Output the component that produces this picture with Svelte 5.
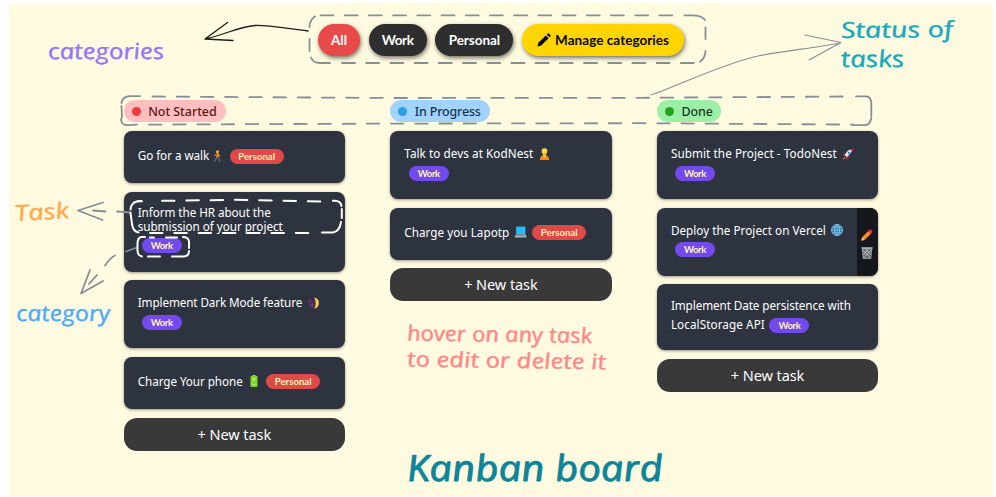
<script>
  const filters = [
    { label: 'All', kind: 'active', width: 42, text: 16 },
    { label: 'Work', kind: 'dark', width: 58, text: 32 },
    { label: 'Personal', kind: 'dark', width: 78, text: 51.5 },
    { label: 'Manage categories', kind: 'manage', width: 162, text: 114 }
  ];

  const columns = [
    {
      title: 'Not Started', tone: 'red', width: 102, text: 68.5,
      tasks: [
        { height: 51.5, pad: 15, gap: 9, lines: [{ text: 'Go for a walk', w: 71.5, icon: 'walk', iw: 8, space: 4, tag: 'Personal', tagGap: 8.5 }] },
        { height: 80, pad: 13, gap: 8, lines: [{ text: 'Inform the HR about the', w: 133, tight: true }, { text: 'submission of your project', w: 145, tight: true }, { tag: 'Work', tagGap: 4, tall: true }] },
        { height: 68, pad: 13.5, gap: 9.5, lines: [{ text: 'Implement Dark Mode feature', w: 164.5, icon: 'moon', iw: 12, space: 5 }, { tag: 'Work', tagGap: 4 }] },
        { height: 51.5, pad: 14.5, gap: 9, lines: [{ text: 'Charge Your phone', w: 105, icon: 'battery', iw: 10, space: 6, tag: 'Personal', tagGap: 7.5 }] }
      ]
    },
    {
      title: 'In Progress', tone: 'blue', width: 99.5, text: 66,
      tasks: [
        { height: 67.5, pad: 13, gap: 9, lines: [{ text: 'Talk to devs at KodNest', w: 129, icon: 'person', iw: 11, space: 5.5 }, { tag: 'Work', tagGap: 4.5 }] },
        { height: 52.5, pad: 15, gap: 8, lines: [{ text: 'Charge you Lapotp', w: 105, icon: 'laptop', iw: 13, space: 4.5, tag: 'Personal', tagGap: 5.5 }] }
      ]
    },
    {
      title: 'Done', tone: 'green', width: 64.5, text: 31.5,
      tasks: [
        { height: 67.5, pad: 13, gap: 9, lines: [{ text: 'Submit the Project - TodoNest', w: 166, icon: 'rocket', iw: 12, space: 5 }, { tag: 'Work', tagGap: 4 }] },
        { height: 68, pad: 13, gap: 8.5, tools: true, lines: [{ text: 'Deploy the Project on Vercel', w: 155, icon: 'globe', iw: 12, space: 5 }, { tag: 'Work', tagGap: 4 }] },
        { height: 66, pad: 12, gap: 9, lines: [{ text: 'Implement Date persistence with', w: 180 }, { text: 'LocalStorage API', w: 94, tag: 'Work', tagGap: 4.5 }] }
      ]
    }
  ];

  // Spread the letters so that a label fills its measure.
  function fit(node, width) {
    node.style.letterSpacing = '0px';
    const natural = node.getBoundingClientRect().width;
    node.style.letterSpacing = (width - natural) / node.textContent.length + 'px';
  }
</script>

{#snippet icon(name, w)}
  <svg class="icon" width={w} height="12" viewBox="0 0 {w} 12">
    {#if name === 'walk'}
      <circle cx="4.5" cy="1.7" r="1.5" fill="#f5b82e" />
      <path d="M3.5 3.2h2l.5 4h-3z" fill="#f58220" />
      <path d="M3.4 3.8 1.2 6M5.5 4l2 2.3" stroke="#e3a62c" stroke-width="1" fill="none" />
      <path d="M3.7 7 3 9.2 1.3 11.5M5.2 7l.8 2 .7 2.5" stroke="#65727e" stroke-width="1.2" fill="none" />
    {:else if name === 'moon'}
      <circle cx="6" cy="6" r="5.7" fill="#46304f" />
      <path d="M7.2.4A5.7 5.7 0 0 1 7.2 11.6Q10.500 6 7.2.4" fill="#ffd04a" />
      <circle cx="3" cy="4" r="1.1" fill="#6b4176" /><circle cx="5.3" cy="8" r="1.4" fill="#6b4176" /><circle cx="5.6" cy="2.5" r=".7" fill="#27192d" />
    {:else if name === 'battery'}
      <rect x="3.5" y="0" width="3" height="2" fill="#b8c4c8" />
      <rect x="1.5" y="1" width="7" height="11" rx="1" fill="#83d72b" />
      <path d="M5 3v2.4M3.8 4.2h2.4M4 9.5h2" stroke="#e3f6cf" stroke-width=".9" />
    {:else if name === 'person'}
      <path d="M.8 12q.4-5 4.700-5t4.700 5z" fill="#f58a16" />
      <path d="M4 6h3v2.500L5.500 10 4 8.500z" fill="#f7bd35" />
      <circle cx="5.5" cy="3.8" r="2.7" fill="#ffc83d" />
      <path d="M2.600 3.600Q2.500.2 5.500.2t2.900 3.400z" fill="#f6df42" />
    {:else if name === 'laptop'}
      <rect x="2" y=".5" width="9.5" height="8" rx=".6" fill="#20bdf7" stroke="#46616f" stroke-width=".5" />
      <path d="M1.800 8.500h9.800l1.200 3H.6z" fill="#b4b7bb" /><path d="M2.200 9.700h8.800" stroke="#777" stroke-width=".7" />
    {:else if name === 'rocket'}
      <path d="m2.300 5.200-2 2.700 2.600-.3 1.800 1.800-.3 2.400 2.900-2.700z" fill="#e3174b" />
      <path d="M2.800 7Q5.500 1.400 9.800 1.200q.8 3-5.200 8z" fill="#e4edf2" />
      <path d="M11.800.2 8.200 1.200 10.800 4z" fill="#e3174b" />
      <circle cx="7" cy="5" r="1.3" fill="#418ab7" /><path d="m2.800 9-2.300 2.400 2.800-1z" fill="#f8a524" />
    {:else if name === 'globe'}
      <circle cx="6" cy="6" r="5.5" fill="#2679ad" stroke="#79bce2" stroke-width=".9" />
      <ellipse cx="6" cy="6" rx="2.5" ry="5.5" fill="none" stroke="#9ad0ee" stroke-width=".8" />
      <path d="M6 .5v11M.5 6h11M1.300 3.200h9.400M1.300 8.800h9.400" fill="none" stroke="#9ad0ee" stroke-width=".7" />
    {:else if name === 'pencil'}
      <path d="m1 8.300 6.500-6.500 2.700 2.700L3.700 11z" fill="#fb8a24" /><path d="m7 2.300 1.400-1.500q.8-.8 1.700 0l1 .9q.8.8 0 1.700L9.700 5z" fill="#ee2a50" /><path d="m1 8.300-.8 3.500 3.500-.8z" fill="#f6c98c" />
    {:else if name === 'bin'}
      <path d="M1.200 1.800 2.200 11.500h7.600l1-9.700z" fill="#60666a" stroke="#b9bec1" stroke-width=".7" />
      <path d="M2 3l7.300 8M4.800 2.200l5 5.800M10 3l-7.300 8M7.200 2.200l-5 5.800" stroke="#d1d5d8" stroke-width=".8" fill="none" /><path d="M.4 1.100h11.200" stroke="#b9bec1" stroke-width="1.5" />
    {/if}
  </svg>
{/snippet}

<main>
  <div class="canvas">
    <nav>
      {#each filters as f}
        <button class={f.kind} style="width:{f.width}px">
          {#if f.kind === 'manage'}
            <svg width="14" height="14" viewBox="0 0 14 14"><path d="M.5 13.500 1.400 9.800 8.800 2.400l2.800 2.800-7.400 7.400zM9.700 1.600l.9-.9q.7-.7 1.400 0l1.300 1.300q.7.7 0 1.400l-.9.9z" /></svg>
          {/if}
          <span use:fit={f.text}>{f.label}</span>
        </button>
      {/each}
    </nav>
    <div class="board">
      {#each columns as col}
        <section>
          <h2 class={col.tone} style="width:{col.width}px"><i></i><span use:fit={col.text}>{col.title}</span></h2>
          {#each col.tasks as task}
            <article style="height:{task.height}px;padding-top:{task.pad}px;margin-bottom:{task.gap}px">
              {#each task.lines as line}
                <div class="line" class:tight={line.tight} class:tall={line.tall}>
                  {#if line.text}<span use:fit={line.w}>{line.text}</span>{/if}
                  {#if line.icon}<b class="emoji" style="margin-left:{line.space}px">{@render icon(line.icon, line.iw)}</b>{/if}
                  {#if line.tag}<em class={line.tag} style="margin-left:{line.tagGap}px"><span use:fit={line.tag === 'Work' ? 22 : 37}>{line.tag}</span></em>{/if}
                </div>
              {/each}
              {#if task.tools}
                <aside>{@render icon('pencil', 12)}{@render icon('bin', 12)}</aside>
              {/if}
            </article>
          {/each}
          <button class="new"><span use:fit={73.5}>+ New task</span></button>
        </section>
      {/each}
    </div>
  </div>

  <svg class="notes" width="996" height="497" viewBox="0 0 996 497">
    <g class="stroke">
      <path stroke-dasharray="13 11.2" d="M320.500 15.300H682" />
      <path d="M684.500 15.300H692Q702 15.300 705 20M705.500 27.500V39M705.500 51Q705 59 700 61.500M315 16.500Q309.500 20 309.500 27M309.500 39V51M311 57.500Q313 63 320 63H330" />
      <path stroke-dasharray="13 11.200" d="M342 63H694" />
      <path stroke-dasharray="12.500 11.700" d="M152.500 96.500 390 98 640 97.800 845 96.500" />
      <path stroke-dasharray="12.500 11.700" d="M149 124.600 390 123.600 640 123.200 853 124.600" />
      <path d="M140 96.200H130Q122.500 96.500 121.500 103M121.500 106 122 117 121 119.500Q121.500 125.500 128 125.200L137 124.700M856 96.300H866Q871 96.500 871.300 103V116M871.300 118Q870 125.500 864 125.200H853" />
      <path class="thin" d="M651 95C679 85 731 61 758 56C782 51 815 48 840 43M805 35 841 42.500 809 60" />
      <path class="thin dark" d="M308 31C283 28 268 25 255 25.500C238 27 227 34 205 39M227.500 22.500 205 39 233 40.500" />
      <path d="M131 212.500 117 211.500M105.500 211.500 93 210.500M103 202.500 78 210.500 102.500 220" />
      <path d="M137 247.500 126 251.500M115 255.500Q111 257 105 265.500M97 275 89 284M90 270 81 293.500 103 281" />
      <g class="white">
        <path stroke-dasharray="12.500 11.800" d="M162 200.800 235 199.800 323 201.500" />
        <path d="M141.500 201H138Q130.500 203 130.500 209.500M130.500 213 132 224Q133 231.500 138.500 232.500M333 200.800Q340.500 200 341.500 206M341.800 209V218M341 222Q339.500 231.500 333 232.500H322M134 202.500Q137 201 142 201.300" />
        <path stroke-dasharray="12.500 11.800" d="M150 233H311" />
        <path d="M145 237H141Q137.500 238 137.500 244V251Q138 256 142 256.500M148 256.500H160M172 256.500H184Q189 256 189 251M189 248V241Q188 237 183 237M150 237.500H154M166 237.500H177" />
      </g>
    </g>
    <g class="hand">
      <text transform="translate(49 59) skewX(10)" font-size="22" textLength="116" lengthAdjust="spacingAndGlyphs" fill="#9775fa" stroke="#9775fa">categories</text>
      <text transform="translate(842 38) rotate(-.5) skewX(10)" font-size="22" textLength="112" lengthAdjust="spacingAndGlyphs" fill="#15aabf" stroke="#15aabf">Status of</text>
      <text transform="translate(842 67) skewX(10)" font-size="23" textLength="63" lengthAdjust="spacingAndGlyphs" fill="#15aabf" stroke="#15aabf">tasks</text>
      <text transform="translate(16 221) rotate(-3) skewX(8)" font-size="22" textLength="54" lengthAdjust="spacingAndGlyphs" fill="#ffa94d" stroke="#ffa94d">Task</text>
      <text transform="translate(17 321) skewX(8)" font-size="22" textLength="94" lengthAdjust="spacingAndGlyphs" fill="#4dabf7" stroke="#4dabf7">category</text>
      <text transform="translate(408 340.500) rotate(.8) skewX(10)" font-size="21" textLength="185" lengthAdjust="spacingAndGlyphs" fill="#ff8787" stroke="#ff8787">hover on any task</text>
      <text transform="translate(408 366.500) rotate(.8) skewX(10)" font-size="21" textLength="199" lengthAdjust="spacingAndGlyphs" fill="#ff8787" stroke="#ff8787">to edit or delete it</text>
      <text class="title" transform="translate(408 481) skewX(7)" font-size="36" textLength="256" lengthAdjust="spacingAndGlyphs" fill="#0c8599" stroke="#0c8599">Kanban board</text>
    </g>
  </svg>
</main>

<style>
  :global(body) { margin: 0; background: #fff; overflow: hidden; }
  main { box-sizing: border-box; width: 996px; height: 497px; padding: 3px 3px 1px 9px; position: relative; font-family: "Noto Sans", sans-serif; }
  .canvas { height: 493px; background: #fffae0; overflow: hidden; }
  nav { display: flex; gap: 8.7px; padding: 21px 0 0 309px; height: 32px; }
  button { border: 0; padding: 0; font-family: inherit; display: flex; align-items: center; justify-content: center; white-space: nowrap; color: #fff; }
  nav button { height: 32px; border-radius: 16px; font: 700 13.5px Lato, sans-serif; box-shadow: 1px 2px 4px rgba(0,0,0,.55); background: #2e2e2e; flex: none; }
  nav .active { background: #e84a49; }
  nav .manage { background: #ffd500; color: #080808; gap: 4px; }
  .board { display: flex; gap: 45.3px; padding: 44px 0 0 114.7px; }
  section { width: 221.3px; flex: none; }
  h2 { margin: 0 0 9px; height: 22px; border-radius: 11px; display: flex; align-items: center; box-sizing: border-box; padding-left: 8px; gap: 7.5px; font-size: 12.5px; font-weight: 500; white-space: nowrap; }
  h2 i { width: 9px; height: 9px; border-radius: 50%; flex: none; }
  .red { background: #ffbfc0; color: #5d1715; }
  .red i { background: #ed3b3c; }
  .blue { background: #a2d3ff; color: #183347; }
  .blue i { background: #2a9fe8; }
  .green { background: #9cf0a5; color: #1c3829; }
  .green i { background: #26a31c; }
  article { box-sizing: border-box; padding-left: 14px; position: relative; background: #2d3440; color: #fff; border-radius: 8px; box-shadow: 0 1px 3px rgba(0,0,0,.4); overflow: hidden; }
  .line { height: 19px; display: flex; align-items: center; font-size: 11.7px; white-space: nowrap; line-height: 19px; }
  .tight { height: 14px; line-height: 14px; }
  .tall { height: 24px; }
  .emoji, .icon { display: block; flex: none; }
  em { width: 40px; height: 15px; border-radius: 8px; display: flex; align-items: center; justify-content: center; margin-top: 1px; background: #734af0; color: #fff3b4; font: 700 9.5px/15px Lato, sans-serif; flex: none; }
  .Personal { width: 54px; background: #df4a49; }
  aside { position: absolute; right: 0; top: 0; bottom: 0; width: 21.5px; box-sizing: border-box; background: #14171c; display: flex; flex-direction: column; align-items: center; gap: 6px; padding-top: 21.5px; }
  .new { width: 100%; height: 33px; border-radius: 13px; background: #393939; font-size: 14.5px; padding-bottom: 1px; }
  .notes { position: absolute; left: 0; top: 0; pointer-events: none; }
  .stroke { fill: none; stroke: #868e96; stroke-width: 1.8; stroke-linecap: round; stroke-linejoin: round; }
  .thin { stroke-width: 1.1; }
  .dark { stroke: #1e1e1e; stroke-width: 1.3; }
  .white { stroke: #fff; stroke-width: 2; }
  .hand { font-family: "Open Sans", sans-serif; font-style: italic; stroke-width: .4; stroke-linejoin: round; }
  .title { stroke-width: .9; }
</style>
